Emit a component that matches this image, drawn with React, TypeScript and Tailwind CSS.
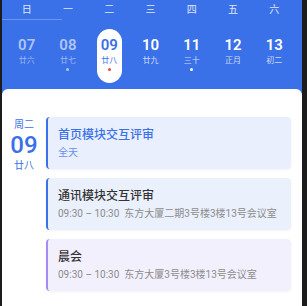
const weekDays = ["日", "一", "二", "三", "四", "五", "六"]

const days = [
    { num: "07", lunar: "廿六", past: true, dot: false },
    { num: "08", lunar: "廿七", past: true, dot: true },
    { num: "09", lunar: "廿八", today: true, dot: true },
    { num: "10", lunar: "廿九", dot: false },
    { num: "11", lunar: "三十", dot: true },
    { num: "12", lunar: "正月", dot: false },
    { num: "13", lunar: "初二", dot: false },
]

type Day = { num: string; lunar: string; past?: boolean; today?: boolean; dot?: boolean }

const DayCell = ({ day }: { day: Day }) => {
    const numColor = day.today ? "text-[#3a70e8]" : day.past ? "text-white/60" : "text-white"
    const lunarColor = day.today ? "text-[#3a70e8]" : day.past ? "text-white/50" : "text-white/75"
    const dotColor = day.today ? "bg-[#f04438]" : day.past ? "bg-white/60" : "bg-white"

    return (
        <div className="flex justify-center">
            <div className={`flex h-[54px] w-[25px] flex-col items-center rounded-full pt-[7px] ${day.today ? "bg-white" : ""}`}>
                <span className={`text-[15px] font-semibold leading-[18px] ${numColor}`}>{day.num}</span>
                <span className={`mt-[2px] text-[8px] leading-[10px] ${lunarColor}`}>{day.lunar}</span>
                <span className={`mt-[2px] size-[3px] rounded-full ${day.dot ? dotColor : ""}`} />
            </div>
        </div>
    )
}

const events = [
    {
        title: "首页模块交互评审",
        sub: "全天",
        bg: "bg-[#e9effc]",
        border: "border-[#3a70e8]",
        titleColor: "text-[#3a70e8]",
        subColor: "text-[#6a91ee]",
    },
    {
        title: "通讯模块交互评审",
        sub: "09:30 – 10:30\u00a0\u00a0东方大厦二期3号楼3楼13号会议室",
        bg: "bg-[#eaf0fc]",
        border: "border-[#3a70e8]",
        titleColor: "text-[#333333]",
        subColor: "text-[#8c8c8c]",
    },
    {
        title: "晨会",
        sub: "09:30 – 10:30\u00a0\u00a0东方大厦3号楼3楼13号会议室",
        bg: "bg-[#f3f0fe]",
        border: "border-[#a58cf5]",
        titleColor: "text-[#333333] font-bold",
        subColor: "text-[#8c8c8c]",
    },
]

export default function App() {
    return (
        <div
            className="flex h-[306px] w-[307px] bg-[#1c1c1c]"
            style={{ fontFamily: "Roboto, 'Noto Sans CJK SC', sans-serif" }}
        >
            <div className="ml-[2px] flex w-[300px] flex-col bg-[#3a70e8]">
                {/* week header */}
                <div className="ml-[4px] grid h-[19px] w-[289px] grid-cols-7 items-center">
                    {weekDays.map((w) => (
                        <span key={w} className="text-center text-[10px] leading-[12px] text-white/85">
                            {w}
                        </span>
                    ))}
                </div>
                <div className="h-px w-[60px] bg-white/25" />

                <div className="ml-[4px] mt-[9px] grid w-[289px] grid-cols-7">
                    {days.map((d) => (
                        <DayCell key={d.num} day={d} />
                    ))}
                </div>

                {/* agenda */}
                <div className="mt-[6px] flex flex-1 rounded-t-[6px] bg-white pr-[11px] pt-[28px]">
                    <div className="flex w-[44px] flex-col items-center text-[#3a70e8]">
                        <span className="mt-[2px] text-[10px] leading-[12px]">周二</span>
                        <span className="mt-[1px] text-[24px] font-medium leading-[26px]">09</span>
                        <span className="mt-[2px] text-[10px] leading-[12px]">廿八</span>
                    </div>
                    <div className="flex flex-1 flex-col gap-[9px]">
                        {events.map((e) => (
                            <div
                                key={e.title}
                                className={`h-[52px] rounded-[4px] border-l-2 pl-[10px] pt-[9px] shadow-[0_1px_3px_rgba(0,0,0,0.05)] ${e.bg} ${e.border}`}
                            >
                                <div className={`text-[12px] font-medium leading-[18px] ${e.titleColor}`}>{e.title}</div>
                                <div className={`mt-[2px] whitespace-nowrap text-[10px] leading-[14px] ${e.subColor}`}>{e.sub}</div>
                            </div>
                        ))}
                    </div>
                </div>
            </div>
        </div>
    )
}
